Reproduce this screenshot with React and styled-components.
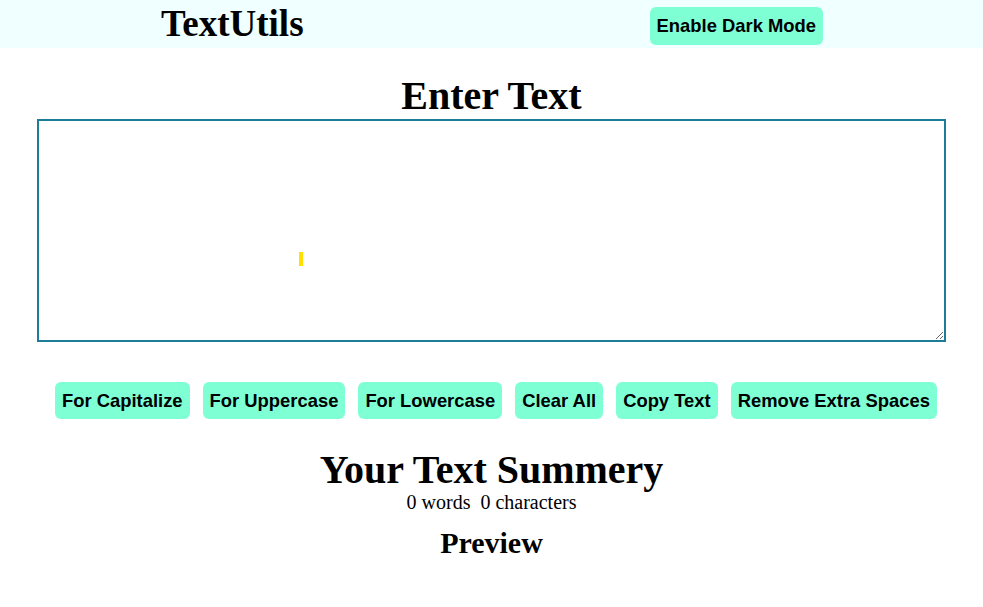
import styled, { createGlobalStyle } from "styled-components";
import { useState } from "react";

const GlobalStyle = createGlobalStyle`
  body {
    margin: 0;
    background: #ffffff;
    font-family: "Liberation Serif", "Times New Roman", serif;
    color: #000;
  }
`;

const Navbar = styled.nav`
  height: 48px;
  background-color: #f0ffff;
  display: flex;
  align-items: center;
  justify-content: space-between;
  padding: 0 160px 0 161px;
`;

const Brand = styled.div`
  font-family: "Liberation Serif", "Times New Roman", serif;
  font-size: 37px;
  font-weight: 700;
  line-height: 1;
  margin-top: -2px;
`;

const Button = styled.button`
  font-family: "Liberation Sans", Arial, sans-serif;
  font-size: 18.4px;
  font-weight: 700;
  color: #000;
  background-color: aquamarine;
  border: none;
  border-radius: 6px;
  padding: 0 7px;
  height: 37px;
  cursor: pointer;
`;

const DarkButton = styled(Button)`
  height: 38px;
  margin-top: 4px;
`;

const Main = styled.main`
  padding: 0 37px;
`;

const Heading = styled.h1`
  font-size: ${(p) => p.size || "40px"};
  font-weight: 700;
  text-align: center;
  margin: ${(p) => p.margin || "0"};
`;

const Box = styled.div`
  position: relative;
`;

const TextArea = styled.textarea`
  display: block;
  box-sizing: border-box;
  width: 100%;
  height: 223px;
  border: 2px solid #1b7d9a;
  outline: none;
  padding: 4px;
  font-family: "Liberation Sans", Arial, sans-serif;
  font-size: 16px;
  resize: vertical;
`;

const Caret = styled.span`
  position: absolute;
  left: 262px;
  top: 133px;
  width: 4px;
  height: 14px;
  background: #ffe000;
`;

const ButtonRow = styled.div`
  display: flex;
  gap: 13px;
  padding-left: 18px;
  margin-top: 40px;
`;

const Stats = styled.p`
  font-size: 20px;
  text-align: center;
  margin: -2px 0 0;
`;

export default function App() {
  const [text, setText] = useState("");
  const words = text.split(/\s+/).filter((w) => w.length > 0).length;

  return (
    <>
      <GlobalStyle />
      <Navbar>
        <Brand>TextUtils</Brand>
        <DarkButton>Enable Dark Mode</DarkButton>
      </Navbar>
      <Main>
        <Heading margin="24px 0 0">Enter Text</Heading>
        <Box>
          <TextArea value={text} onChange={(e) => setText(e.target.value)} />
          <Caret />
        </Box>
        <ButtonRow>
          <Button>For Capitalize</Button>
          <Button>For Uppercase</Button>
          <Button>For Lowercase</Button>
          <Button onClick={() => setText("")}>Clear All</Button>
          <Button>Copy Text</Button>
          <Button>Remove Extra Spaces</Button>
        </ButtonRow>
        <Heading margin="27px 0 0">Your Text Summery</Heading>
        <Stats>
          {words} words&nbsp; {text.length} characters
        </Stats>
        <Heading size="30px" margin="12px 0 0">Preview</Heading>
      </Main>
    </>
  );
}
